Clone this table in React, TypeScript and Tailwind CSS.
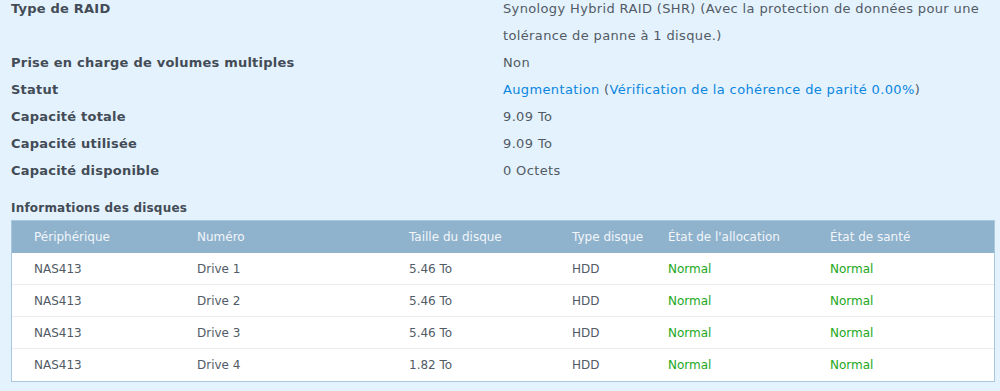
import React from 'react';

const font = { fontFamily: '"DejaVu Sans", Verdana, sans-serif' };

const props: { label: string; value: React.ReactNode }[] = [
  {
    label: 'Type de RAID',
    value: 'Synology Hybrid RAID (SHR) (Avec la protection de données pour une tolérance de panne à 1 disque.)',
  },
  { label: 'Prise en charge de volumes multiples', value: 'Non' },
  {
    label: 'Statut',
    value: (
      <>
        <span className="text-[#0a86e0]">Augmentation</span> (
        <span className="text-[#0a86e0]">Vérification de la cohérence de parité 0.00%</span>)
      </>
    ),
  },
  { label: 'Capacité totale', value: '9.09 To' },
  { label: 'Capacité utilisée', value: '9.09 To' },
  { label: 'Capacité disponible', value: '0 Octets' },
];

const cols = ['Périphérique', 'Numéro', 'Taille du disque', 'Type disque', "État de l'allocation", 'État de santé'];
const widths = ['w-[163px]', 'w-[212px]', 'w-[163px]', 'w-[96px]', 'w-[162px]', 'flex-1'];

const disks = [
  ['NAS413', 'Drive 1', '5.46 To'],
  ['NAS413', 'Drive 2', '5.46 To'],
  ['NAS413', 'Drive 3', '5.46 To'],
  ['NAS413', 'Drive 4', '1.82 To'],
];

export default function App() {
  return (
    <div className="w-[1000px] h-[391px] overflow-hidden bg-[#e4f2fd]" style={font}>
      <div className="-mt-[5px] pl-[11px] pr-[10px]">
        {props.map((p) => (
          <div key={p.label} className="flex text-[13px] leading-[27px]">
            <div className="w-[492px] shrink-0 font-bold text-[#434c56] tracking-[0.22px]">{p.label}</div>
            <div className="w-[484px] text-[#525b65] tracking-[0.36px]">{p.value}</div>
          </div>
        ))}
        <div className="mt-[16px] text-[12px] font-bold text-[#434c56] leading-[16px] tracking-[0.2px]">
          Informations des disques
        </div>
        <div className="mt-[4px] mr-[-5px] border border-[#a9c7dd] bg-white">
          <div className="flex h-[32px] items-center bg-[#8fb2cd] text-[12px] text-[#f2f6fa] pl-[22px]">
            {cols.map((c, i) => (
              <div key={c} className={widths[i]}>{c}</div>
            ))}
          </div>
          {disks.map((d, r) => (
            <div
              key={d[1]}
              className={`flex h-[32px] items-center text-[12px] text-[#525b65] pl-[22px] ${r < 3 ? 'border-b border-[#ececec]' : ''}`}
            >
              <div className={widths[0]}>{d[0]}</div>
              <div className={widths[1]}>{d[1]}</div>
              <div className={widths[2]}>{d[2]}</div>
              <div className={widths[3]}>HDD</div>
              <div className={`${widths[4]} text-[#20a81a]`}>Normal</div>
              <div className={`${widths[5]} text-[#20a81a]`}>Normal</div>
            </div>
          ))}
        </div>
      </div>
    </div>
  );
}
